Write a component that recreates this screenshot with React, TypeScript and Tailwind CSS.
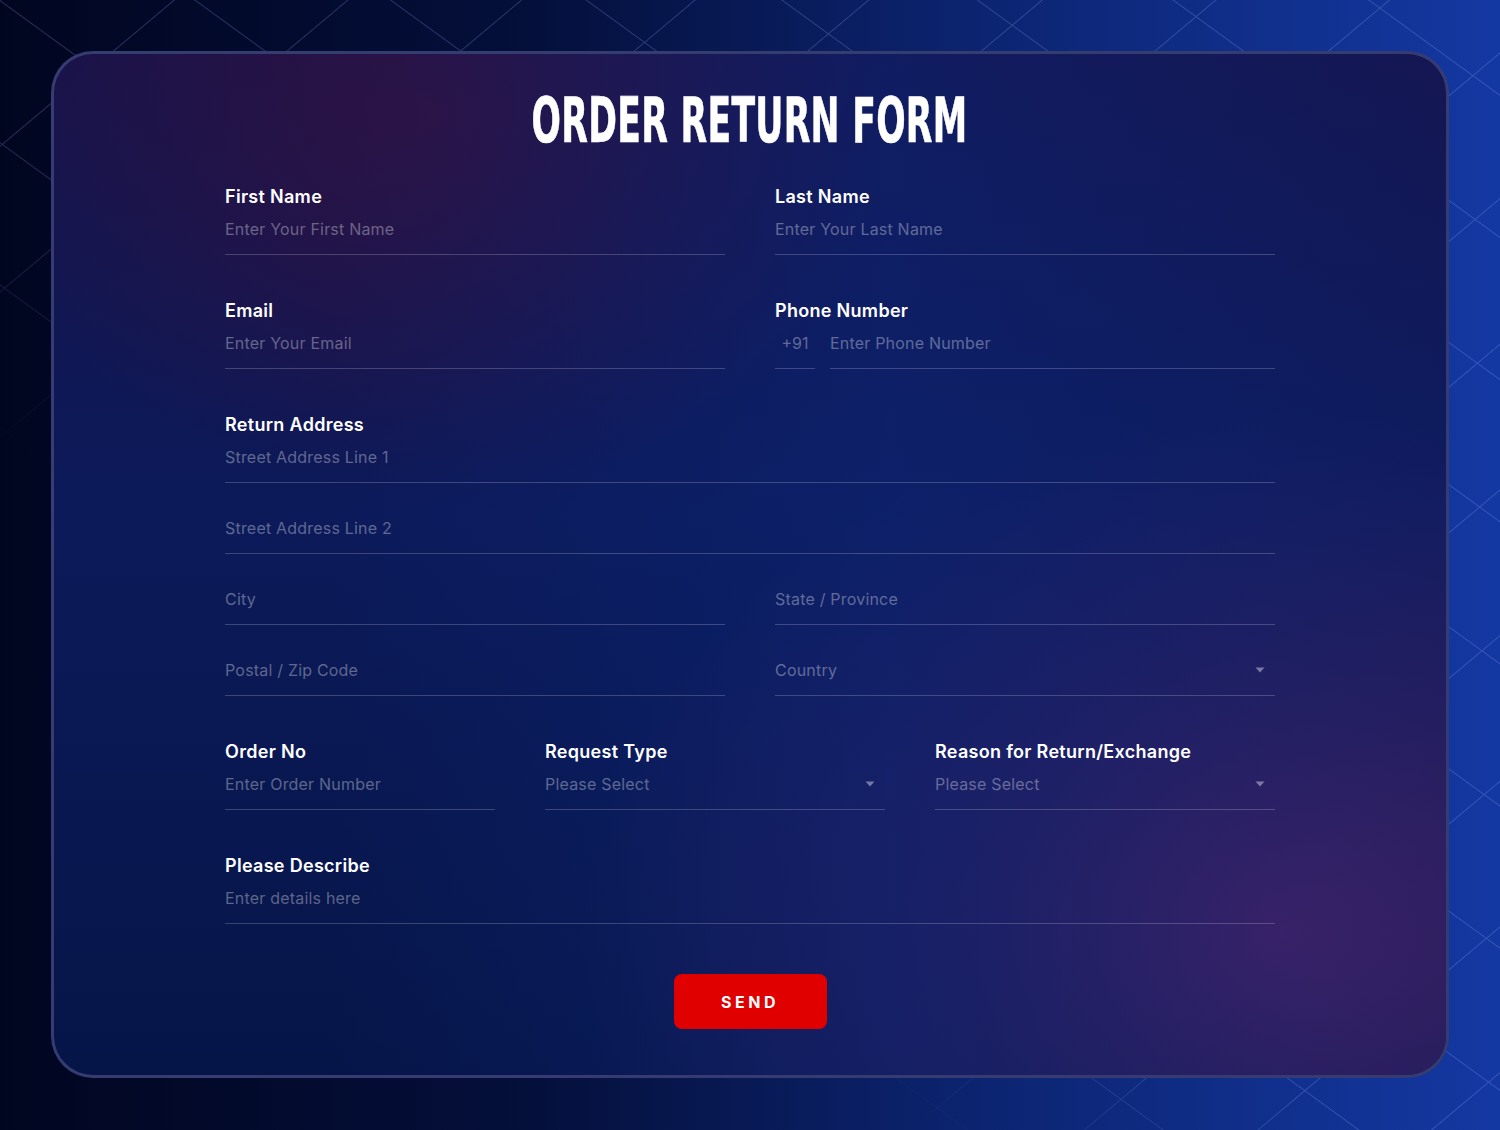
import React from 'react';

const font = "font-['Inter','Noto_Sans',sans-serif]";

function Caret() {
  return (
    <svg width="10" height="6" viewBox="0 0 10 6" className="shrink-0">
      <path d="M0.5 0.5 L9.5 0.5 L5 5.5 Z" fill="rgba(255,255,255,0.4)" />
    </svg>
  );
}

function Input({ placeholder, select = false }: { placeholder: string; select?: boolean }) {
  return (
    <div className="flex items-center justify-between border-b-[1.5px] border-white/20 pt-2 pb-[13px] pr-[10px]">
      <span className="text-base leading-6 tracking-[0.2px] text-white/35">{placeholder}</span>
      {select && <Caret />}
    </div>
  );
}

function Label({ children }: { children: React.ReactNode }) {
  return <div className="text-[18px] font-semibold leading-6 tracking-[0.3px] text-white">{children}</div>;
}

function Field({ label, placeholder, select = false }: { label: string; placeholder: string; select?: boolean }) {
  return (
    <div className="flex flex-col">
      <Label>{label}</Label>
      <Input placeholder={placeholder} select={select} />
    </div>
  );
}

function GridLines() {
  return (
    <svg className="pointer-events-none absolute inset-0 h-full w-full" aria-hidden="true">
      <defs>
        <pattern id="lattice" width="115" height="115" patternUnits="userSpaceOnUse" patternTransform="rotate(36) skewX(-14)">
          <path d="M0 0 H115 M0 0 V115" stroke="rgba(150,175,255,0.26)" strokeWidth="2" fill="none" />
        </pattern>
        <linearGradient id="fade" x1="0" y1="1" x2="1" y2="0">
          <stop offset="0" stopColor="black" />
          <stop offset="0.3" stopColor="black" />
          <stop offset="0.45" stopColor="white" />
          <stop offset="1" stopColor="white" />
        </linearGradient>
        <mask id="latticeMask">
          <rect width="100%" height="100%" fill="url(#fade)" />
        </mask>
      </defs>
      <rect width="100%" height="100%" fill="url(#lattice)" mask="url(#latticeMask)" />
    </svg>
  );
}

export default function App() {
  return (
    <div className={`relative min-h-[1130px] w-full overflow-hidden bg-[linear-gradient(90deg,#010620_0%,#040f3a_35%,#0c2470_65%,#1438a2_100%)] ${font}`}>
      <GridLines />
      <div className="relative px-[51px] pt-[51px] pb-[52px]">
        <div className="overflow-hidden rounded-[42px] border-[3px] border-[#40467a]/80 bg-[linear-gradient(180deg,#15134a_0%,#0c1a5a_45%,#061548_100%)]">
          <div className="bg-[radial-gradient(ellipse_460px_380px_at_27%_6%,rgba(50,18,66,0.85),transparent),radial-gradient(ellipse_700px_520px_at_88%_86%,rgba(70,32,98,1),rgba(70,32,98,0.5)_45%,transparent)]">
            <div className="bg-[linear-gradient(90deg,transparent_20%,rgba(12,38,120,0.5)_60%,rgba(16,40,128,0.15))] pt-[36px] pb-[46px]">
              <h1 className="flex h-[62px] items-center justify-center">
                <span className="inline-block scale-x-[0.62] font-['Liberation_Sans_Narrow','DejaVu_Sans_Condensed',sans-serif] text-[62px] font-bold leading-none tracking-[0.5px] text-white [-webkit-text-stroke:0.6px_white]">
                  ORDER RETURN FORM
                </span>
              </h1>

              <div className="mx-auto mt-[33px] flex w-[1050px] flex-col">
                <div className="grid grid-cols-2 gap-x-[50px]">
                  <Field label="First Name" placeholder="Enter Your First Name" />
                  <Field label="Last Name" placeholder="Enter Your Last Name" />
                </div>

                <div className="mt-[44px] grid grid-cols-2 gap-x-[50px]">
                  <Field label="Email" placeholder="Enter Your Email" />
                  <div className="flex flex-col">
                    <Label>Phone Number</Label>
                    <div className="flex gap-[15px]">
                      <div className="w-[40px] border-b-[1.5px] border-white/20 pt-2 pb-[13px] text-center text-base leading-6 text-white/35">
                        +91
                      </div>
                      <div className="flex-1">
                        <Input placeholder="Enter Phone Number" />
                      </div>
                    </div>
                  </div>
                </div>

                <div className="mt-[44px] flex flex-col">
                  <Field label="Return Address" placeholder="Street Address Line 1" />
                  <div className="mt-[25px]">
                    <Input placeholder="Street Address Line 2" />
                  </div>
                  <div className="mt-[25px] grid grid-cols-2 gap-x-[50px]">
                    <Input placeholder="City" />
                    <Input placeholder="State / Province" />
                  </div>
                  <div className="mt-[25px] grid grid-cols-2 gap-x-[50px]">
                    <Input placeholder="Postal / Zip Code" />
                    <Input placeholder="Country" select />
                  </div>
                </div>

                <div className="mt-[44px] grid grid-cols-[270px_340px_340px] gap-x-[50px]">
                  <Field label="Order No" placeholder="Enter Order Number" />
                  <Field label="Request Type" placeholder="Please Select" select />
                  <Field label="Reason for Return/Exchange" placeholder="Please Select" select />
                </div>

                <div className="mt-[44px]">
                  <Field label="Please Describe" placeholder="Enter details here" />
                </div>

                <div className="mt-[50px] flex justify-center">
                  <button className="h-[55px] w-[153px] rounded-[8px] bg-[#e00000] text-[16px] font-bold tracking-[3.5px] text-white">
                    SEND
                  </button>
                </div>
              </div>
            </div>
          </div>
        </div>
      </div>
    </div>
  );
}
